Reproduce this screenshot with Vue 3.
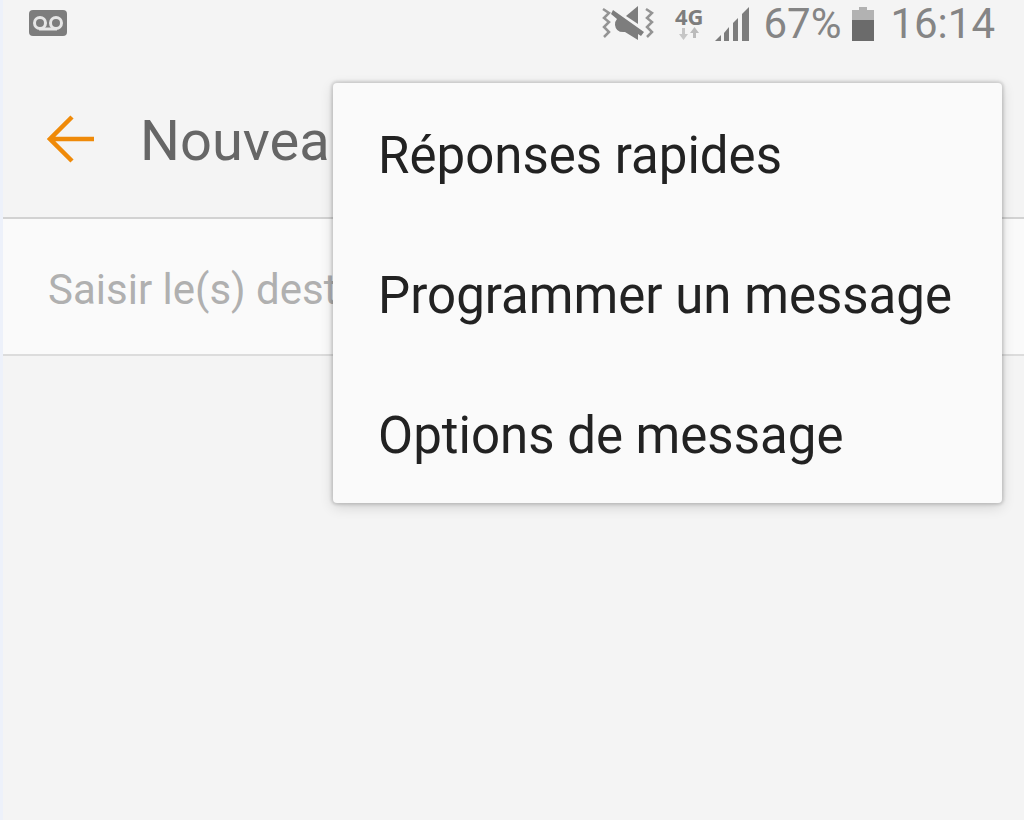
<script setup>
import { ref } from 'vue'

const recipients = ref('')
const menuItems = ['Réponses rapides', 'Programmer un message', 'Options de message']
</script>

<template>
  <div class="screen">
    <header class="status">
      <svg class="voicemail" width="40" height="28" viewBox="0 0 40 28" aria-hidden="true">
        <rect x="1" y="0" width="38" height="26" rx="4" fill="#7d7d7d" />
        <g fill="none" stroke="#e6e6e6" stroke-width="3">
          <circle cx="12" cy="13" r="5.500" />
          <circle cx="28" cy="13" r="5.500" />
          <path d="M11 19H29" />
        </g>
      </svg>
      <div class="indicators">
        <svg class="mute" width="54" height="38" viewBox="0 0 54 38" aria-hidden="true">
          <g fill="none" stroke="#949494" stroke-width="2.5">
            <path d="M2 4l6 4-5 5 5 4-5 5 5 5-5 5" />
            <path d="M45 4l6 4-5 5 5 4-5 5 5 5-5 5" />
          </g>
          <path d="M37 1V19L25 11z" fill="#7d7d7d" />
          <path d="M12 5L43 27L40 31L37 29V35L24 27Q15 28 14 20Q14 16 16 14L10 9z" fill="#7d7d7d" />
        </svg>
        <div class="network">
          <span class="network-label">4G</span>
          <svg width="20" height="14" viewBox="0 0 20 14" aria-hidden="true">
            <path d="M3 1H6V7H9L4.500 13L0 7H3z" fill="#c6c6c6" />
            <path d="M14 11V6H11L15.500 0L20 6H17V11z" fill="#bbb" />
          </svg>
        </div>
        <svg class="signal" width="36" height="36" viewBox="0 0 36 36" aria-hidden="true">
          <path d="M0 35L6 29V35z" fill="#7d7d7d" />
          <path d="M9 35V27L14 21V35z" fill="#7d7d7d" />
          <path d="M18 35V17L23 12V35z" fill="#7d7d7d" />
          <path d="M27 35V8L34 1V35z" fill="#7d7d7d" />
        </svg>
        <span class="percent">67%</span>
        <svg class="battery" width="24" height="36" viewBox="0 0 24 36" aria-hidden="true">
          <path d="M8 1H16V4H23V15H1V4H8z" fill="#b2b2b2" />
          <path d="M1 14H23V35H1z" fill="#6b6b6b" />
        </svg>
        <time class="clock">16:14</time>
      </div>
    </header>

    <div class="toolbar">
      <button class="back" type="button" aria-label="Retour">
        <svg width="48" height="48" viewBox="0 0 48 48" aria-hidden="true">
          <path d="M25 2L3 24L25 46M3 24H47" fill="none" stroke="#ef8a09" stroke-width="4.500" />
        </svg>
      </button>
      <h1 class="title">Nouvea</h1>
    </div>

    <div class="recipient">
      <input v-model="recipients" type="text" placeholder="Saisir le(s) dest" aria-label="Saisir le(s) dest" />
    </div>

    <div class="menu" role="menu">
      <button v-for="item in menuItems" :key="item" class="menu-item" type="button" role="menuitem">{{ item }}</button>
    </div>
  </div>
</template>

<style>
body {
  margin: 0;
  background: #f4f4f4;
}
</style>

<style scoped>
.screen {
  position: relative;
  box-sizing: border-box;
  min-height: 100vh;
  border-left: 3px solid #edf1fa;
  background: #f4f4f4;
  font-family: Roboto, "Noto Sans", sans-serif;
}
.status {
  display: flex;
  align-items: center;
  justify-content: space-between;
  height: 48px;
  padding: 0 29px 0 25px;
}
.indicators {
  display: flex;
  align-items: center;
  color: #858585;
  font-size: 42px;
  line-height: 48px;
}
.voicemail,
.mute,
.signal,
.battery {
  display: block;
  flex: none;
}
.mute {
  margin-right: 20px;
}
.network {
  display: flex;
  flex-direction: column;
  align-items: center;
  gap: 2px;
  margin-right: 12px;
}
.network-label {
  color: #7d7d7d;
  font-family: "Noto Sans", sans-serif;
  font-size: 22px;
  font-weight: 700;
  line-height: 18px;
}
.signal {
  margin-right: 12px;
}
.battery {
  margin: 0 15px 0 10px;
}
.toolbar {
  display: flex;
  align-items: center;
  box-sizing: border-box;
  height: 171px;
  padding: 12px 44px 0;
  border-bottom: 2px solid #d2d2d2;
}
.back {
  display: flex;
  margin: 0 45px 0 0;
  padding: 0;
  border: 0;
  background: none;
}
.title {
  margin: 0;
  padding-top: 4px;
  color: #666;
  font-size: 56px;
  font-weight: 400;
  line-height: 64px;
}
.recipient {
  display: flex;
  box-sizing: border-box;
  height: 137px;
  border-bottom: 2px solid #dcdcdc;
  background: #fafafa;
}
.recipient input {
  flex: 1;
  min-width: 0;
  padding: 6px 45px 0;
  border: 0;
  outline: 0;
  background: none;
  color: #252525;
  font: 400 42px Roboto, "Noto Sans", sans-serif;
}
.recipient input::placeholder {
  color: #b0b0b0;
  opacity: 1;
}
.menu {
  position: absolute;
  top: 83px;
  right: 22px;
  display: flex;
  flex-direction: column;
  border-radius: 4px;
  background: #fafafa;
  box-shadow: 0 0 3px 2px rgba(0, 0, 0, 0.14), 0 4px 14px rgba(0, 0, 0, 0.14);
}
.menu-item {
  height: 140px;
  margin: 0;
  padding: 5px 50px 0 45px;
  border: 0;
  background: none;
  color: #222;
  font: 400 51px Roboto, "Noto Sans", sans-serif;
  text-align: left;
  white-space: nowrap;
}
</style>
